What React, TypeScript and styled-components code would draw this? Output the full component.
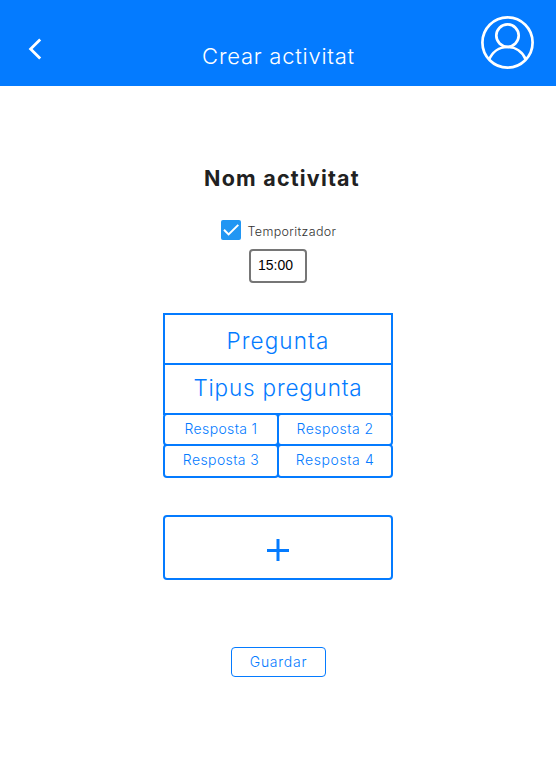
import React, { useState } from "react";
import styled, { createGlobalStyle } from "styled-components";

const BLUE = "#047bff";

const GlobalStyle = createGlobalStyle`
  *, *::before, *::after { box-sizing: border-box; }
  body {
    margin: 0;
    background: #fff;
    font-family: Inter, "Open Sans", sans-serif;
    font-weight: 400;
    color: #212121;
  }
  button, input { font: inherit; margin: 0; }
`;

const Page = styled.div`
  min-height: 765px;
  display: flex;
  flex-direction: column;
`;

const Header = styled.header`
  height: 86px;
  padding: 16px 22px 0 26px;
  display: grid;
  grid-template-columns: 100px 1fr 100px;
  background: ${BLUE};
  color: #fff;
`;

const IconButton = styled.button<{ $end?: boolean }>`
  justify-self: ${(p) => (p.$end ? "end" : "start")};
  align-self: start;
  margin-top: ${(p) => (p.$end ? 0 : 21)}px;
  padding: 0;
  border: 0;
  background: none;
  color: inherit;
  svg { display: block; }
`;

const Label = styled.span<{
  $size: number;
  $spacing?: number;
  $weight?: number;
}>`
  font-size: ${(p) => p.$size}px;
  font-weight: ${(p) => p.$weight ?? 300};
  letter-spacing: ${(p) => p.$spacing ?? 0}px;
  white-space: nowrap;
`;

const Title = styled.h1`
  margin: 25px 3px 0 0;
  display: flex;
  justify-content: center;
  line-height: 30px;
  height: 30px;
`;

const Main = styled.main`
  display: flex;
  flex-direction: column;
  align-items: center;
`;

const ActivityName = styled.h2`
  margin: 77px 0 0 8px;
  height: 30px;
  line-height: 30px;
  display: flex;
`;

const TimerLabel = styled.label`
  margin: 27px 0 0 1px;
  width: 116px;
  height: 20px;
  display: flex;
  align-items: center;
  gap: 7px;
  line-height: 20px;
  color: #333;
  span { padding-top: 3px; }
`;

const CheckBox = styled.button`
  flex: none;
  width: 20px;
  height: 20px;
  padding: 0;
  border: 0;
  border-radius: 2px;
  background: #2196f3;
  svg { display: block; }
`;

const TimeInput = styled.input`
  margin-top: 9px;
  width: 58px;
  height: 34px;
  padding: 0 7px 3px;
  border: 2px solid #767676;
  border-radius: 4px;
  font: 14px "Liberation Sans", Arial, sans-serif;
  color: #000;
  outline: 0;
`;

const QuestionCard = styled.section`
  margin-top: 30px;
  width: 230px;
`;

const QuestionRow = styled.div<{ $drop?: number }>`
  height: 52px;
  margin-bottom: -2px;
  padding-top: ${(p) => p.$drop ?? 0}px;
  border: 2px solid ${BLUE};
  display: flex;
  justify-content: center;
  line-height: 44px;
  color: ${BLUE};
`;

const Answers = styled.div`
  display: grid;
  grid-template-columns: 114px 114px;
  grid-template-rows: 31px 32px;
  padding-bottom: 2px;
`;

const Answer = styled.div`
  width: 116px;
  height: calc(100% + 2px);
  padding-bottom: 3px;
  border: 2px solid ${BLUE};
  border-radius: 4px;
  display: flex;
  align-items: center;
  justify-content: center;
  color: ${BLUE};
`;

const AddButton = styled.button`
  margin-top: 37px;
  width: 230px;
  height: 65px;
  padding: 4px 0 0;
  border: 2px solid ${BLUE};
  border-radius: 4px;
  background: #fff;
  color: ${BLUE};
  display: flex;
  align-items: center;
  justify-content: center;
`;

const SaveButton = styled.button`
  margin: 67px 0 0 1px;
  width: 95px;
  height: 30px;
  padding: 0 0 2px;
  border: 1px solid ${BLUE};
  border-radius: 4px;
  background: #fff;
  color: ${BLUE};
  display: flex;
  align-items: center;
  justify-content: center;
`;

const BackIcon = () => (
  <svg width="18" height="24" viewBox="0 0 18 24" fill="none" stroke="currentColor" strokeWidth="2.8">
    <path d="M14.2 2.4 4.6 12 14.2 21.6" />
  </svg>
);

const UserIcon = () => (
  <svg width="53" height="53" viewBox="0 0 53 53" fill="none" stroke="currentColor" strokeWidth="2.7">
    <circle cx="26.5" cy="26.5" r="25.1" />
    <circle cx="26.5" cy="19.6" r="11.2" />
    <path d="M8 44C11.2 36 18.2 31 26.5 31S41.8 36 45 44" />
  </svg>
);

const CheckIcon = () => (
  <svg width="20" height="20" viewBox="0 0 20 20" fill="none" stroke="#fff" strokeWidth="2">
    <path d="M3 9.8 7.6 14.4 17.3 4.9" />
  </svg>
);

const PlusIcon = () => (
  <svg width="24" height="24" viewBox="0 0 24 24" fill="none" stroke="currentColor" strokeWidth="3">
    <path d="M12 1V23M1 12.5H23" />
  </svg>
);

const answers = [
  { text: "Resposta 1", spacing: 0.35 },
  { text: "Resposta 2", spacing: 0.45 },
  { text: "Resposta 3", spacing: 0.4 },
  { text: "Resposta 4", spacing: 0.6 },
];

export default function App() {
  const [timed, setTimed] = useState(true);
  const [time, setTime] = useState("15:00");

  return (
    <Page>
      <GlobalStyle />
      <Header>
        <IconButton aria-label="Enrere"><BackIcon /></IconButton>
        <Title><Label $size={22} $weight={350} $spacing={0.75}>Crear activitat</Label></Title>
        <IconButton $end aria-label="Perfil"><UserIcon /></IconButton>
      </Header>
      <Main>
        <ActivityName><Label $size={21.5} $weight={700} $spacing={1.2}>Nom activitat</Label></ActivityName>
        <TimerLabel>
          <CheckBox type="button" role="checkbox" aria-checked={timed} onClick={() => setTimed(!timed)}>
            {timed && <CheckIcon />}
          </CheckBox>
          <Label $size={12.5} $spacing={0.35}>Temporitzador</Label>
        </TimerLabel>
        <TimeInput value={time} onChange={(e) => setTime(e.target.value)} />
        <QuestionCard>
          <QuestionRow $drop={4}><Label $size={22.5} $spacing={1.1}>Pregunta</Label></QuestionRow>
          <QuestionRow $drop={1}><Label $size={22.5} $spacing={0.8}>Tipus pregunta</Label></QuestionRow>
          <Answers>
            {answers.map(({ text, spacing }) => (
              <Answer key={text}><Label $size={14} $spacing={spacing}>{text}</Label></Answer>
            ))}
          </Answers>
        </QuestionCard>
        <AddButton aria-label="Afegir pregunta"><PlusIcon /></AddButton>
        <SaveButton><Label $size={14} $spacing={0.75}>Guardar</Label></SaveButton>
      </Main>
    </Page>
  );
}
